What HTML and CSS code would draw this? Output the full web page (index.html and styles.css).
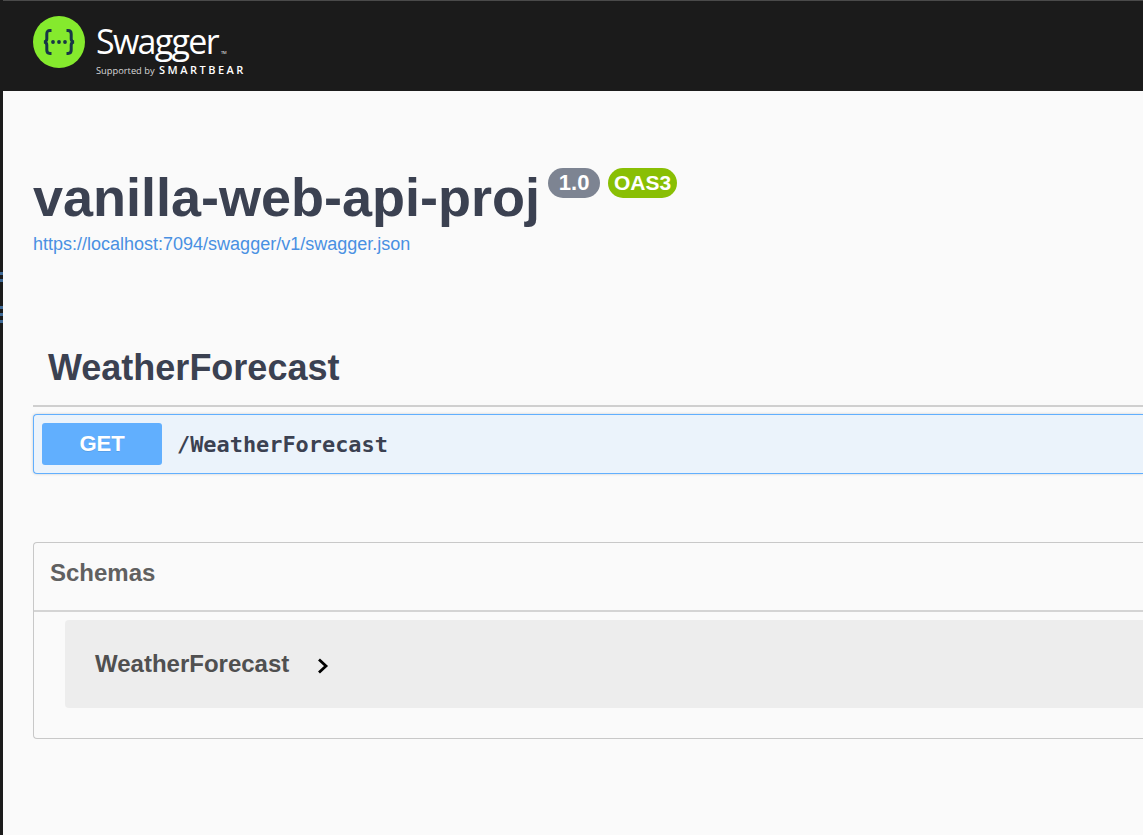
FILE: index.html
```html
<!doctype html>
<html lang="en">
    <head>
        <meta charset="UTF-8" />
        <meta name="viewport" content="width=device-width, initial-scale=1" />
        <link rel="stylesheet" href="styles.css">
        <title>Swagger UI</title>
    </head>
    <body>
        <!-- sliver of the window behind, on the left edge -->
        <div class="edge">
            <span class="edge-tick"></span>
            <span class="edge-tick"></span>
            <span class="edge-tick next-group"></span>
            <span class="edge-tick"></span>
            <span class="edge-tick"></span>
        </div>
        <div class="page">
            <header class="topbar">
                <svg class="logo-mark" viewBox="0 0 52 52" width="52" height="52">
                    <circle cx="26" cy="26" r="26" fill="#85ea2d" />
                    <path d="M18.500 14.500h-1.500c-2.300 0-3.200 1.200-3.200 3.400v5.200c0 1.600-.8 2.500-2.600 2.900 1.800.4 2.600 1.300 2.600 2.900v5.200c0 2.200.9 3.400 3.200 3.400h1.500M33.500 14.500h1.500c2.300 0 3.200 1.200 3.200 3.400v5.200c0 1.600.8 2.500 2.600 2.900-1.800.4-2.600 1.300-2.600 2.900v5.200c0 2.200-.9 3.400-3.200 3.400h-1.500" fill="none" stroke="#173646" stroke-width="3" />
                    <circle cx="20" cy="26" r="1.900" fill="#173646" />
                    <circle cx="26" cy="26" r="1.900" fill="#173646" />
                    <circle cx="32" cy="26" r="1.900" fill="#173646" />
                </svg>
                <div class="brand">
                    <div class="brand-name">Swagger<span class="tm">TM</span></div>
                    <div class="brand-sub">Supported by <b>SMARTBEAR</b></div>
                </div>
            </header>

            <main class="wrapper">
                <section class="info">
                    <div class="title-row">
                        <h1 class="title">vanilla-web-api-proj</h1>
                        <span class="badge version">1.0</span>
                        <span class="badge oas">OAS3</span>
                    </div>
                    <a class="spec-link" href="#">https://localhost:7094/swagger/v1/swagger.json</a>
                </section>

                <section class="tag-section">
                    <h3 class="tag-title">WeatherForecast</h3>
                    <div class="opblock">
                        <span class="method">GET</span>
                        <span class="path">/WeatherForecast</span>
                    </div>
                </section>

                <section class="schemas">
                    <h4 class="schemas-title">Schemas</h4>
                    <div class="schemas-body">
                        <div class="model">
                            <span class="model-name">WeatherForecast</span>
                            <svg class="chevron" viewBox="0 0 13 18" width="13" height="18">
                                <path d="M3 2.500l7 6.500-7 6.500" fill="none" stroke="#000" stroke-width="2.800" />
                            </svg>
                        </div>
                    </div>
                </section>
            </main>
        </div>
    </body>
</html>
```

FILE: styles.css
```css
html,
body {
    margin: 0;
    padding: 0;
    height: 100%;
    overflow: hidden;
}
body {
    display: flex;
    background: #fafafa;
    font-family: "Liberation Sans", Arial, sans-serif;
    color: #3b4151;
}
h1,
h3,
h4 {
    margin: 0;
}

/* -- left edge -- */

.edge {
    width: 3px;
    flex: none;
    background: #1b1b1b;
    padding-top: 272px;
}
.edge-tick {
    display: block;
    width: 3px;
    height: 3px;
    background: #3f6a96;
    margin-bottom: 4px;
}
.edge-tick.next-group {
    margin-top: 24px;
}

/* -- top bar -- */

.page {
    flex: 1;
    min-width: 0;
}
.topbar {
    height: 91px;
    box-sizing: border-box;
    background: #1b1b1b;
    border-top: 1px solid #4a4a4a;
    padding: 15px 0 0 30px;
    display: flex;
    align-items: flex-start;
    gap: 11px;
}
.brand {
    color: #fff;
    font-family: "Open Sans", sans-serif;
}
.brand-name {
    font-size: 34px;
    font-weight: 400;
    line-height: 44px;
    letter-spacing: -1.700px;
    margin-top: 3px;
}
.tm {
    font-size: 4px;
    line-height: 1;
    letter-spacing: 0;
    margin-left: 3px;
}
.brand-sub {
    font-size: 9.300px;
    line-height: 13px;
    color: #d8d8d8;
    white-space: nowrap;
}
.brand-sub b {
    font-size: 11px;
    font-weight: 600;
    letter-spacing: 2.500px;
    color: #fff;
    margin-left: 2px;
}

/* -- content -- */

.wrapper {
    padding: 0 0 0 30px;
}
.info {
    padding-top: 76px;
}
.title-row {
    display: flex;
    align-items: flex-start;
}
.title {
    font-size: 54px;
    line-height: 60px;
    font-weight: 700;
    white-space: nowrap;
}
.badge {
    color: #fff;
    font-weight: 700;
    border-radius: 15px;
    height: 30px;
    line-height: 30px;
    text-align: center;
    margin-top: 1px;
}
.version {
    width: 52px;
    font-size: 22px;
    background: #7d8492;
    margin-left: 8px;
}
.oas {
    width: 69px;
    font-size: 21px;
    background: #89bf04;
    margin-left: 8px;
}
.spec-link {
    display: block;
    font-size: 18px;
    line-height: 20px;
    color: #4990e2;
    text-decoration: none;
    margin-top: 7px;
}

.tag-section {
    margin-top: 77px;
}
.tag-title {
    font-size: 36px;
    line-height: 54px;
    font-weight: 700;
    padding: 10px 0 10px 15px;
    border-bottom: 2px solid #cfcfcf;
}
.opblock {
    margin-top: 7px;
    height: 42px;
    border: 1px solid #61affe;
    border-right: none;
    border-radius: 4px 0 0 4px;
    background: #ebf3fb;
    box-shadow: 0 0 3px rgba(0, 0, 0, 0.19);
    padding: 8px;
    display: flex;
    align-items: center;
}
.method {
    width: 120px;
    height: 42px;
    line-height: 42px;
    border-radius: 3px;
    background: #61affe;
    color: #fff;
    font-size: 22px;
    font-weight: 700;
    text-align: center;
    text-shadow: 0 1px 0 rgba(0, 0, 0, 0.1);
}
.path {
    margin-left: 15px;
    font-family: "DejaVu Sans Mono", monospace;
    font-size: 21.900px;
    font-weight: 700;
}

.schemas {
    margin-top: 68px;
    border: 1px solid #c8c8c8;
    border-right: none;
    border-radius: 4px 0 0 4px;
    height: 195px;
}
.schemas-title {
    font-size: 24px;
    line-height: 30px;
    font-weight: 700;
    color: #606060;
    padding: 15px 0 22px 16px;
    border-bottom: 2px solid #d4d4d4;
}
.schemas-body {
    padding: 8px 0 0 31px;
}
.model {
    height: 88px;
    background: #ededed;
    border-radius: 4px 0 0 4px;
    padding-left: 30px;
    display: flex;
    align-items: center;
    gap: 27px;
}
.model-name {
    font-size: 24px;
    font-weight: 700;
    color: #505050;
}
.chevron {
    margin-top: 3px;
}
```
